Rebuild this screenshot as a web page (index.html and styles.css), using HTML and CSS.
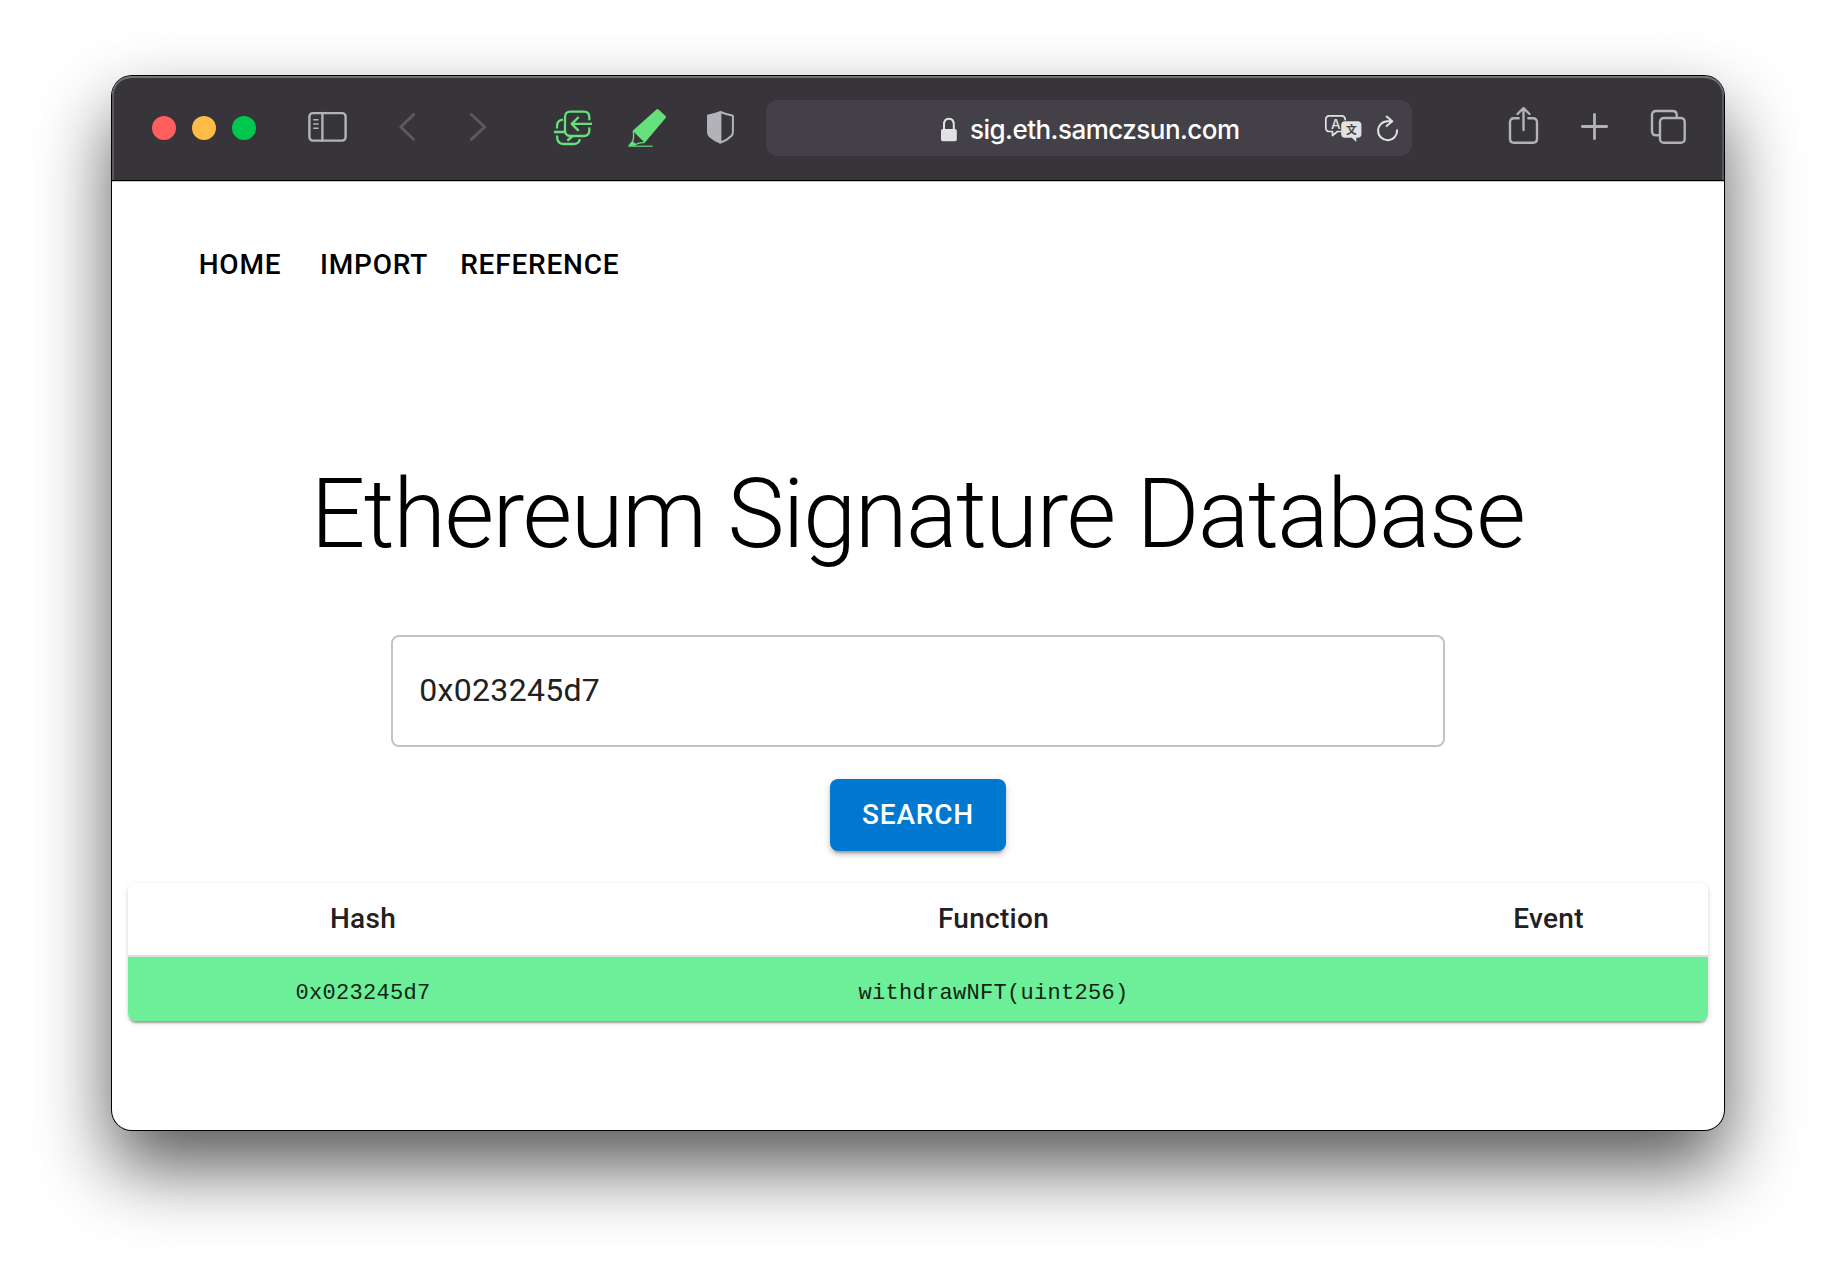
FILE: index.html
```html
<!DOCTYPE html>
<html lang="en">
<head>
<meta charset="utf-8">
<title>Ethereum Signature Database</title>
<link rel="stylesheet" href="styles.css">
</head>
<body>
<div class="window">
  <header class="toolbar">
    <div class="lights"><span class="light close"></span><span class="light minimize"></span><span class="light maximize"></span></div>
    <svg class="icon sidebar" width="44" height="44" viewBox="0 0 44 44"><rect x="4.4" y="7.1" width="36.2" height="27.5" rx="3.5"/><path d="M17.4 7v27.5"/><path class="thin" d="M8.8 13.7h4.2M8.8 18h4.2M8.8 22.3h4.2"/></svg>
    <svg class="icon back" width="24" height="44" viewBox="0 0 24 44"><path d="M17.7 8.5 4.8 21l12.9 12.4"/></svg>
    <svg class="icon forward" width="24" height="44" viewBox="0 0 24 44"><path d="M5.3 8.5 18.7 21 5.3 33.4"/></svg>
    <svg class="icon green sync" width="44" height="44" viewBox="0 0 44 44"><path d="M38.3 14.3v-3.2q0-5.4-5.4-5.4H19.4Q14 5.700 14 11.100v13.500q0 5.400 5.400 5.400h13.500q5.400 0 5.400-5.400v-3M41 17.900H20.500M27.700 11l-7 6.900 7 7"/><path d="M12 13.700q-6 .6-6 6.500v2.300M3 26h11M6 29.500q0 8.500 6.500 8.500h10q5.700 0 6.200-5M21.300 30.500l-5 4"/></svg>
    <svg class="icon marker" width="44" height="44" viewBox="0 0 44 44"><path class="solid" d="M7.700 24.700 31.500 3.500q1-.9 2 .1l7 6.500q1 1 .1 2L19.700 36.700Z"/><path class="nib" d="M8.300 25.500q1 6.500-1 10.500M19 36.700q-4-.7-8 1.500"/><path class="solid" d="M7.300 35.200q-2.700 2-4 4.300 0 1 1.500 1h4l3-2Z"/><path class="line" d="M4 40.200h23"/></svg>
    <svg class="icon shield" width="32" height="44" viewBox="0 0 32 44"><path class="solid" d="M15.400 5v32.700Q9 35.500 4 31q-2-2-2-5V9.700Q2 9 3 8.600 10 7 15.400 5Z"/><path d="M15.400 6q5.300 2.200 12 3.500.5.100.5.700V26q0 2.500-1.600 4-4.500 4.500-10.900 6.600Z"/></svg>
    <div class="address">
      <svg class="lock" width="20" height="32" viewBox="0 0 20 32"><rect class="fill" x="2" y="17" width="15.800" height="12.200" rx="1.800"/><path d="M5 18v-5.500q0-5.800 4.900-5.800t4.900 5.800V18"/></svg>
      <span class="url">sig.eth.samczsun.com</span>
      <svg class="translate" width="40" height="32" viewBox="0 0 40 32"><path d="M18 19.500h-3.500l-5 4v-4H6.500q-3.700 0-3.700-3.700V7.500q0-3.700 3.700-3.700h12q3.500 0 3.700 3.900"/><path class="fill" d="M22 9.200h12.600q3.800 0 3.800 3.800v9q0 3.800-3.800 3.800h-1.300V30l-4.600-4.200H22q-3.800 0-3.800-3.800v-9q0-3.800 3.800-3.800Z"/><text class="latin" x="8" y="16.800">A</text><text class="han" x="23" y="21.500">文</text></svg>
      <svg class="reload" width="24" height="32" viewBox="0 0 24 32"><path d="M17 9.200h-4.500a9.500 9.500 0 1 0 9.600 9.100M11.600 4.600l5.700 4.700-5.700 4.800"/></svg>
    </div>
    <svg class="icon share" width="36" height="44" viewBox="0 0 36 44"><path d="M12.700 12.300H8q-4 0-4 4v16.400q0 4 4 4h19q4 0 4-4V16.300q0-4-4-4h-4.700M17.500 24V2.500M11.500 8l6-5.800 6 5.800"/></svg>
    <svg class="icon plus" width="32" height="44" viewBox="0 0 32 44"><path d="M15.500 8.300v24.400M3.300 20.500h24.400"/></svg>
    <svg class="icon tabs" width="40" height="44" viewBox="0 0 40 44"><rect x="11" y="12" width="24.700" height="24.700" rx="3.800"/><path d="M10.800 29.300H7q-4 0-4-4V9q0-4 4-4h16.700q4 0 4 4v2.800"/></svg>
  </header>
  <main class="page">
    <nav class="nav"><a class="link">HOME</a><a class="link">IMPORT</a><a class="link">REFERENCE</a></nav>
    <h1 class="title">Ethereum Signature Database</h1>
    <div class="query">0x023245d7</div>
    <button class="search">SEARCH</button>
    <table class="results">
      <colgroup><col class="col-hash"><col class="col-function"><col class="col-event"></colgroup>
      <thead><tr><th>Hash</th><th>Function</th><th>Event</th></tr></thead>
      <tbody><tr><td><code>0x023245d7</code></td><td><code>withdrawNFT(uint256)</code></td><td></td></tr></tbody>
    </table>
  </main>
</div>
</body>
</html>
```
FILE: styles.css
```css
* { box-sizing: border-box; }
body {
  margin: 0;
  padding: 76px 112px;
  height: 1278px;
  overflow: hidden;
  background: #fff;
  font-family: Roboto, sans-serif;
}
.window {
  height: 1054px;
  border-radius: 20px;
  background: #fff;
  box-shadow: 0 0 0 1px #000, 0 37px 74px rgba(0, 0, 0, .66);
}
.toolbar {
  display: flex;
  align-items: center;
  height: 105px;
  padding-left: 40px;
  background: #37353a;
  border-bottom: 1px solid #000;
  border-radius: 20px 20px 0 0;
  box-shadow: inset 0 2px #737472, inset 2px 0 #5a585d, inset -2px 0 #5a585d, 0 1px #c6c6c6;
}
.lights { display: flex; gap: 16px; }
.light { width: 24px; height: 24px; border-radius: 50%; }
.close { background: #ff5f5c; }
.minimize { background: #ffbb47; }
.maximize { background: #00c84f; }
.icon {
  flex: none;
  fill: none;
  stroke: #b4b2b9;
  stroke-width: 2.4;
  stroke-linecap: round;
  stroke-linejoin: round;
}
.icon .thin { stroke-width: 1.6; }
.icon .solid { fill: #b4b2b9; stroke: none; }
.sidebar { margin-left: 49px; }
.back { margin-left: 47px; stroke: #5c5a60; stroke-width: 2.8; }
.forward { margin-left: 46px; stroke: #5c5a60; stroke-width: 2.8; }
.sync { margin-left: 61px; stroke: #65e17b; stroke-width: 2.3; stroke-linecap: butt; }
.marker { margin-left: 30px; stroke: #65e17b; }
.marker .solid { fill: #65e17b; }
.marker .nib { stroke-width: 1.3; }
.marker .line { stroke-width: 1.6; stroke: #55b968; }
.shield { margin-left: 36px; stroke-width: 2; }
.address {
  display: flex;
  align-items: center;
  width: 646px;
  height: 56px;
  margin-left: 29px;
  padding: 0 13px 0 173px;
  border-radius: 12px;
  background: #434147;
}
.address svg { flex: none; fill: none; stroke: #e2e2e3; stroke-width: 2; stroke-linecap: round; stroke-linejoin: round; }
.address .fill { fill: #e2e2e3; stroke: none; }
.url {
  margin-left: 11px;
  padding-top: 4px;
  font: 500 26px/32px Inter, sans-serif;
  letter-spacing: -.53px;
  color: #fff;
  white-space: nowrap;
}
.address .translate { margin-left: auto; stroke-width: 1.7; }
.translate text { stroke: none; fill: #e2e2e3; font: 500 13.5px Inter, sans-serif; }
.translate .han { fill: #434147; font: 700 10.8px "Noto Sans CJK SC", sans-serif; }
.address .reload { margin-left: 12px; }
.share { margin-left: 94px; }
.plus { margin-left: 37px; stroke-width: 2.8; }
.tabs { margin-left: 38px; }

.page {
  display: flex;
  flex-direction: column;
  align-items: center;
  padding: 47px 16px 0;
}
.nav { display: flex; align-self: flex-start; margin-left: 48px; }
.link {
  min-width: 128px;
  padding: 12px 16px;
  font-size: 28px;
  font-weight: 500;
  line-height: 49px;
  letter-spacing: .02857em;
  text-align: center;
  color: #000;
}
.title {
  margin: 157px 0 65px;
  padding-right: 1px;
  font-size: 96px;
  font-weight: 300;
  line-height: 112px;
  letter-spacing: -.01562em;
  white-space: nowrap;
  color: #000;
}
.query {
  width: 66.6667%;
  height: 112px;
  padding: 0 26px;
  border: 2px solid #c3c3c3;
  border-radius: 8px;
  font-size: 32px;
  line-height: 107px;
  letter-spacing: .00938em;
  color: #212121;
}
.search {
  margin: 32px 0;
  padding: 11px 32px 12px;
  border: 0;
  border-radius: 8px;
  background: #0078d0;
  font: 500 28px/49px Roboto, sans-serif;
  letter-spacing: .02857em;
  color: #fff;
  box-shadow: 0 6px 2px -4px rgba(0, 0, 0, .2), 0 4px 4px rgba(0, 0, 0, .14), 0 2px 10px rgba(0, 0, 0, .12);
}
.results {
  width: 100%;
  table-layout: fixed;
  border-spacing: 0;
  border-radius: 8px;
  overflow: hidden;
  font-size: 28px;
  color: #212121;
  box-shadow: 0 4px 2px -2px rgba(0, 0, 0, .2), 0 2px 2px rgba(0, 0, 0, .14), 0 2px 6px rgba(0, 0, 0, .12);
}
.col-hash { width: 470px; }
.col-function { width: 791px; }
.col-event { width: 319px; }
.results th {
  padding: 12px 32px;
  border-bottom: 2px solid #e0e0e0;
  font-weight: 500;
  line-height: 48px;
  letter-spacing: .01071em;
}
.results td {
  padding: 13px 32px 11px;
  height: 64px;
  background: #6cef98;
  text-align: center;
  line-height: 40px;
  letter-spacing: .01071em;
}
.results code {
  font-family: "Liberation Mono", monospace;
  font-size: 22px;
  line-height: 1;
  color: #102416;
}
```
